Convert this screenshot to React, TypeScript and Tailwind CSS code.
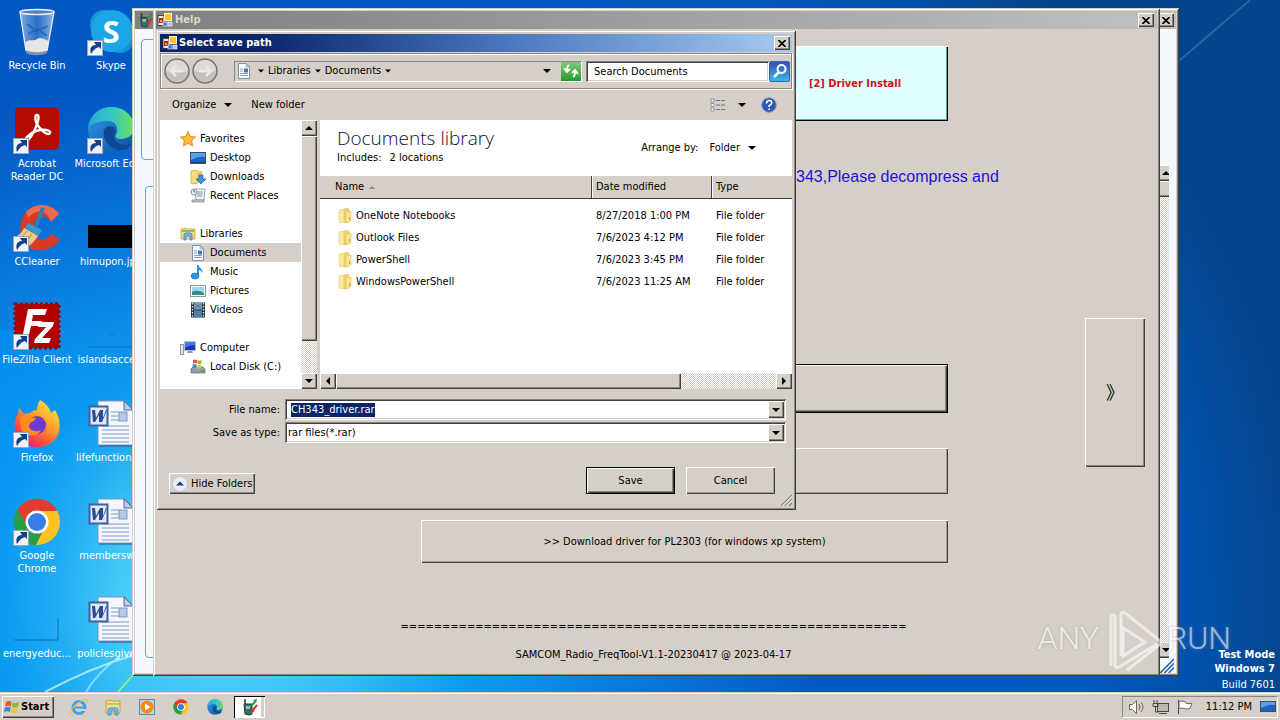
import { useEffect, useRef } from 'react';
import type { ReactNode } from 'react';

const RAISED = 'bg-[#d6cfc8] shadow-[inset_1px_1px_#fff,inset_-1px_-1px_#404040,inset_-2px_-2px_#8a857f]';
const RAISED_THIN = 'bg-[#d6cfc8] shadow-[inset_1px_1px_#fff,inset_-1px_-1px_#404040,inset_-2px_-2px_#a39d97]';
const DEFAULT_BTN = 'bg-[#d6cfc8] border border-black shadow-[inset_1px_1px_#fff,inset_-1px_-1px_#404040,inset_-2px_-2px_#8a857f]';
const SUNKEN = 'bg-white shadow-[inset_1px_1px_#808080,inset_-1px_-1px_#fff,inset_2px_2px_#404040,inset_-2px_-2px_#d6cfc8]';
const WINDOW = 'bg-[#d6cfc8] shadow-[inset_1px_1px_#d6cfc8,inset_-1px_-1px_#404040,inset_2px_2px_#fff,inset_-2px_-2px_#8a857f]';
const DITHER = 'bg-[conic-gradient(#fff_25%,#d6cfc8_0_50%,#fff_0_75%,#d6cfc8_0)] bg-[length:2px_2px]';

type Dir = 'up' | 'down' | 'left' | 'right';

const Arrow = ({ dir = 'down', className = 'size-2' }: { dir?: Dir; className?: string }) => {
	const points = {
		up: '0,6 4,2 8,6',
		down: '0,2 8,2 4,6',
		left: '6,0 2,4 6,8',
		right: '2,0 6,4 2,8',
	};
	return (
		<svg viewBox="0 0 8 8" className={`shrink-0 ${className}`}><polygon points={points[dir]} fill="#000" /></svg>
	);
}

const ScrollButton = ({ dir }: { dir: Dir }) => (
	<button aria-label={`Scroll ${dir}`} className={`flex size-4 shrink-0 items-center justify-center ${RAISED}`}>
		<Arrow dir={dir} />
	</button>
)

const CloseButton = () => (
	<button aria-label="Close" className={`flex h-[14px] w-4 shrink-0 items-center justify-center ${RAISED}`}>
		<svg viewBox="0 0 8 7" className="h-[7px] w-2"><path d="M0.5 0 L7.5 7 M7.5 0 L0.5 7" stroke="#000" strokeWidth="1.6" /></svg>
	</button>
)

const FormIcon = () => (
	<svg viewBox="0 0 16 16" className="size-4 shrink-0">
		<rect x="1" y="3.500" width="6" height="10" fill="#f4e9dc" stroke="#3b2a2a" strokeWidth="0.8" />
		<rect x="2" y="6" width="4" height="5" fill="#c2201c" />
		<rect x="3" y="8" width="2" height="2" fill="#f2a070" />
		<rect x="7.500" y="1.500" width="7" height="7" fill="#ffc524" stroke="#fff2b8" />
		<rect x="6" y="10" width="4" height="4" fill="#3d6fd0" stroke="#fff" strokeWidth="0.6" />
		<rect x="11" y="10" width="4" height="4" fill="#a5c4ef" stroke="#fff" strokeWidth="0.6" />
	</svg>
)

const RadioIcon = ({ className }: { className: string }) => (
	<svg viewBox="0 0 18 18" className={className}>
		<path d="M4 1v6" stroke="#23443f" strokeWidth="1.6" />
		<path d="M3 6h8v10q-3 2-7 0z" fill="#3c6d66" stroke="#1d3a3a" />
		<rect x="5" y="8" width="4" height="3" fill="#7fc6b8" />
		<path d="M10 8l4-4" stroke="#1f9c3a" strokeWidth="2" />
		<path d="M12 2l4-1-1 4z" fill="#1f9c3a" />
		<path d="M16 7l-5 6" stroke="#c8322c" strokeWidth="2" />
		<path d="M10 10l0 5 4-2z" fill="#c8322c" />
	</svg>
)

const Shortcut = () => (
	<g>
		<rect x="0.5" y="32.5" width="15" height="15" fill="#eef3fa" stroke="#9aa7b8" />
		<path d="M4 46c-2-6 1-9 5-9l-2-3h7v7l-2-2c-4 1-5 3-8 7z" fill="#173f85" />
	</g>
)

const RecycleIcon = () => (
	<svg viewBox="0 0 48 48" className="size-12">
		<defs>
			<linearGradient id="bin" x1="0" x2="1"><stop offset="0" stopColor="#b7cee9" stopOpacity="0.75" /><stop offset="0.5" stopColor="#4c86d0" stopOpacity="0.5" /><stop offset="1" stopColor="#c9dcf0" stopOpacity="0.75" /></linearGradient>
		</defs>
		<path d="M7 3l6 40c3 3 18 3 21 0l7-40z" fill="url(#bin)" />
		<path d="M14 16l9 7 12-5M15 26l10-5 9 7" stroke="#1d55a8" strokeWidth="2" fill="none" opacity="0.6" />
		<path d="M12 35c4-5 8-1 12-4s8 1 12 2l-2 10c-4 3-18 3-21 0z" fill="#e8e6e4" />
		<path d="M13 42c4 3 18 3 21 0v3c-5 3-17 3-21 0z" fill="#7e93a8" />
		<ellipse cx="24" cy="4" rx="17" ry="2.5" fill="#4f83c8" stroke="#e6eef7" strokeWidth="1.5" />
		<path d="M7 4l6 39M41 4l-7 39" stroke="#e8f0f8" strokeWidth="1.3" />
	</svg>
)

const SkypeIcon = () => (
	<svg viewBox="0 0 48 48" className="size-12">
		<circle cx="17" cy="16" r="14" fill="#1b93dd" />
		<circle cx="33" cy="31" r="14" fill="#1591da" />
		<circle cx="25" cy="23" r="21" fill="#1ba6ea" />
		<text x="24" y="35" textAnchor="middle" fontFamily="Open Sans" fontWeight="700" fontSize="31" fill="#fff">S</text>
		<Shortcut />
	</svg>
)

const AcrobatIcon = () => (
	<svg viewBox="0 0 48 48" className="size-12">
		<rect x="2" y="1" width="44" height="43" rx="5" fill="#b30b00" />
		<path d="M12 34c2-5 9-9 15-10 7-1 11 1 10 3-2 4-11-4-14-11-1-4-1-7 1-7s2 4 0 9c-2 7-8 17-12 18" fill="none" stroke="#fff" strokeWidth="2.4" />
		<Shortcut />
	</svg>
)

const EdgeShape = () => (
	<>
		<defs>
			<linearGradient id="edgeTop" x1="0" x2="1"><stop offset="0" stopColor="#2aa7d8" /><stop offset="0.55" stopColor="#37c8c4" /><stop offset="1" stopColor="#6de05a" /></linearGradient>
			<linearGradient id="edgeLow" x1="0" y1="0" x2="1" y2="1"><stop offset="0" stopColor="#2a9be6" /><stop offset="1" stopColor="#0c4fa0" /></linearGradient>
		</defs>
		<circle cx="24" cy="24" r="23" fill="url(#edgeLow)" />
		<path d="M1 22C3 8 13 1 25 1c13 0 22 10 22 20 0 8-6 12-13 12-5 0-6-2-5-4 3-5 1-14-8-14C11 15 3 18 1 22z" fill="url(#edgeTop)" />
		<path d="M17 24c-2 10 6 20 18 20 5 0 8-3 10-7-5 3-13 2-16-2-3-3-2-5-1-7 2-4-1-8-5-8-3 0-5 2-6 4z" fill="#0e4a93" />
	</>
)

const EdgeIcon = () => (
	<svg viewBox="0 0 48 48" className="size-12"><EdgeShape /><Shortcut /></svg>
)

const CCleanerIcon = () => (
	<svg viewBox="0 0 48 48" className="size-12">
		<path d="M46 10C39-1 22-2 13 8S6 36 16 43s26 2 31-8l-9-5c-4 6-10 7-14 3s-5-12-1-17 12-5 15 2z" fill="#d83a24" />
		<path d="M46 10C39-1 22-2 13 8l2 6C24 4 34 6 38 18z" fill="#ee6a4c" />
		<path d="M30 4l-7 18" stroke="#2f7fb5" strokeWidth="4" />
		<path d="M15 19l14 7-4 6-14-7z" fill="#3d94c8" />
		<path d="M11 24l14 8c-4 6-9 11-14 12L1 33c5-1 8-5 10-9z" fill="#ecc98c" />
		<path d="M14 27l-8 10M19 30l-8 12" stroke="#b78f4d" />
		<Shortcut />
	</svg>
)

const FileZillaIcon = () => (
	<svg viewBox="0 0 48 48" className="size-12">
		<rect x="2" y="2" width="44" height="44" fill="#b30000" stroke="#8a0d10" strokeWidth="3" strokeDasharray="3 2" />
		<path d="M15 7h19l-2 6H20l-1 6h10l-2 5H18l-3 13H9z" fill="#fff" />
		<path d="M26 20h15l-1 4-11 12h9l-2 5H21l1-4 11-12h-8z" fill="#fff" />
		<Shortcut />
	</svg>
)

const FirefoxIcon = () => (
	<svg viewBox="0 0 48 48" className="size-12">
		<defs>
			<linearGradient id="ffBody" x1="0.9" y1="0" x2="0.2" y2="1"><stop offset="0" stopColor="#fff14a" /><stop offset="0.4" stopColor="#ffa52a" /><stop offset="0.75" stopColor="#ff4a3f" /><stop offset="1" stopColor="#e0127c" /></linearGradient>
		</defs>
		<path d="M27 0c7 4 10 9 11 13l4-3c6 9 6 21 1 28-7 11-25 12-35 3C-1 31 1 19 5 14l1-6 5 6 6-1c3-1 2-3 7-3 0-4 1-7 3-10z" fill="url(#ffBody)" />
		<circle cx="24" cy="25" r="9" fill="#6b3bd0" />
		<path d="M8 17c6-3 9 1 15 1-1 4-6 3-7 8 0 4 7 7 12 4-4 8-16 7-20-1-1-4-1-8 0-12z" fill="#ff8a1f" />
		<Shortcut />
	</svg>
)

const ChromeShape = () => (
	<>
		<path d="M24 24L4.500 11.500A23 23 0 0 1 44 12.500z" fill="#e33b2e" />
		<path d="M24 24L44 12.500A23 23 0 0 1 23 47z" fill="#fdc321" />
		<path d="M24 24L23 47A23 23 0 0 1 4.500 11.500z" fill="#2b9c47" />
		<path d="M24 13h20.500L34 29z" fill="#fdc321" />
		<path d="M14 28L4.500 11.500 30 14z" fill="#e33b2e" />
		<path d="M14.500 29l-9-16L4 14c4 11 8 15 10.500 15zM14.500 29L23 47l9-18z" fill="#2b9c47" />
		<circle cx="24" cy="24" r="11.500" fill="#fff" />
		<circle cx="24" cy="24" r="9" fill="#3a7de8" />
	</>
)

const ChromeIcon = () => (
	<svg viewBox="0 0 48 48" className="size-12"><ChromeShape /><Shortcut /></svg>
)

const WordIcon = () => (
	<svg viewBox="0 0 48 48" className="size-12">
		<path d="M11 1h27l8 9v35H11z" fill="#f3f7fd" stroke="#7d95bf" />
		<path d="M37 1v9h9z" fill="#bccbe4" stroke="#4d6a9e" />
		<path d="M24 12h8M24 16h8M24 20h8M15 26h27M15 30h27M15 34h27M15 38h27M15 42h27" stroke="#7f97c8" />
		<rect x="32" y="12" width="8" height="9" fill="#b6c7e4" stroke="#7f97c8" />
		<rect x="2.500" y="6.500" width="18" height="19" fill="#dfe8f7" stroke="#41609f" strokeWidth="2" />
		<path d="M5 10h3l1 8 4-8h3v8l3-8h1l-5 12h-3v-7l-4 7H6z" fill="#2b4c94" />
		<path d="M12 46h34" stroke="#3a5488" />
	</svg>
)

const BlackThumb = () => <svg viewBox="0 0 48 48" className="size-12"><rect x="1" y="21" width="47" height="23" /></svg>
const LineThumb = () => <svg viewBox="0 0 48 48" className="size-12"><path d="M1 45h46M22 32q3 1 6 0" fill="none" stroke="#1272b8" /></svg>
const CornerThumb = () => <svg viewBox="0 0 48 48" className="size-12"><path d="M1 44h44V22" fill="none" stroke="#146cb0" /></svg>

const desktopIcons: { label: string; icon: ReactNode }[] = [
	{ label: 'Recycle Bin', icon: <RecycleIcon /> },
	{ label: 'Acrobat Reader DC', icon: <AcrobatIcon /> },
	{ label: 'CCleaner', icon: <CCleanerIcon /> },
	{ label: 'FileZilla Client', icon: <FileZillaIcon /> },
	{ label: 'Firefox', icon: <FirefoxIcon /> },
	{ label: 'Google Chrome', icon: <ChromeIcon /> },
	{ label: 'energyeduc...', icon: <CornerThumb /> },
	{ label: 'Skype', icon: <SkypeIcon /> },
	{ label: 'Microsoft Edge', icon: <EdgeIcon /> },
	{ label: 'himupon.jpg', icon: <BlackThumb /> },
	{ label: 'islandsacce...', icon: <LineThumb /> },
	{ label: 'lifefunctions...', icon: <WordIcon /> },
	{ label: 'membersw...', icon: <WordIcon /> },
	{ label: 'policiesgive...', icon: <WordIcon /> },
];

const DesktopIcons = () => (
	<div className="grid w-[148px] grid-flow-col grid-cols-2 grid-rows-[repeat(7,98px)] pt-2 text-white [text-shadow:1px_1px_2px_#003a7a]">
		{desktopIcons.map(({ label, icon }) => (
			<button key={label} className="flex flex-col items-center gap-[3px]">
				{icon}
				<span className={`leading-[13px] ${label.startsWith('Acrobat') || label.startsWith('Google') ? 'w-[60px]' : 'whitespace-nowrap'}`}>{label}</span>
			</button>
		))}
	</div>
)

const Wallpaper = () => (
	<svg viewBox="0 0 1280 692" preserveAspectRatio="none" className="absolute inset-0 size-full">
		<defs>
			<radialGradient id="sky" gradientUnits="userSpaceOnUse" cx="220" cy="600" r="1080" gradientTransform="translate(0 90) scale(1 0.85)">
				<stop offset="0" stopColor="#63dffa" />
				<stop offset="0.12" stopColor="#3cc4f6" />
				<stop offset="0.24" stopColor="#0e9cf0" />
				<stop offset="0.4" stopColor="#0878dc" />
				<stop offset="0.56" stopColor="#0458c4" />
				<stop offset="0.8" stopColor="#0458c0" />
				<stop offset="0.92" stopColor="#0350a8" />
				<stop offset="1" stopColor="#04448a" />
			</radialGradient>
			<linearGradient id="leftEdge" x1="0" x2="1"><stop offset="0" stopColor="#0092f4" stopOpacity="0.6" /><stop offset="1" stopColor="#0092f4" stopOpacity="0" /></linearGradient>
		</defs>
		<rect width="1280" height="692" fill="url(#sky)" />
		<rect y="330" width="120" height="362" fill="url(#leftEdge)" />
		<path d="M45 692Q90 668 134 655" stroke="#bdf2ff" strokeWidth="2" fill="none" opacity="0.8" />
		<path d="M86 692Q98 672 118 658" stroke="#a5ecff" strokeWidth="2" fill="none" opacity="0.7" />
		<path d="M118 692L134 674" stroke="#7df08c" strokeWidth="2" />
		<path d="M1180 60L1250 0" stroke="#4c86c4" strokeWidth="2" opacity="0.5" />
	</svg>
)

const MainWindow = () => (
	<section className={`absolute top-2 right-[101px] bottom-4 left-[132px] flex flex-col p-[3px] ${WINDOW}`}>
		<header className="flex h-[18px] items-center justify-between bg-linear-to-r from-[#808080] to-[#c0c0c0] pr-[2px] pl-[3px]">
			<RadioIcon className="size-4" />
			<CloseButton />
		</header>
		<div className="flex flex-1 flex-col bg-[#f5f9ff] pt-[10px] pl-[6px]">
			<div className="mr-6 h-[121px] rounded-[4px] border border-[#5ba4e6]" />
			<div className="mt-[5px] flex flex-1 gap-2 pr-[7px]">
				<div className="mt-[21px] ml-1 flex-1 rounded-[4px] border border-[#5ba4e6]" />
				<div className={`flex w-[11px] flex-col overflow-hidden ${DITHER}`}>
					<ScrollButton dir="up" />
					<div className={`h-4 w-4 ${RAISED}`} />
					<div className="flex-1" />
					<ScrollButton dir="down" />
				</div>
			</div>
			<svg viewBox="0 0 14 14" className="mr-[2px] size-[15px] self-end"><path d="M1 14L14 1M5 14L14 5M9 14L14 9" stroke="#2c6ab8" strokeWidth="1.5" /></svg>
		</div>
	</section>
)

const HelpWindow = () => (
	<section className={`absolute top-2 right-[120px] bottom-4 left-[153px] flex flex-col p-[3px] ${WINDOW}`}>
		<header className="flex h-[18px] items-center gap-[2px] bg-linear-to-r from-[#808080] to-[#c0c0c0] pr-[3px] pl-px">
			<FormIcon />
			<h1 className="flex-1 font-bold text-[#dcd7d0]">Help</h1>
			<CloseButton />
		</header>
		<div className="flex justify-between pr-3 pl-[265px]">
			<div className="flex w-[527px] flex-col pt-[17px]">
				<button className="h-[75px] w-[186px] self-end bg-[#e0ffff] font-bold text-[#d0101c] shadow-[inset_1px_1px_#fff,inset_-1px_-1px_#000,inset_-2px_-2px_#5fa8a8]">[2] Driver Install</button>
				<p className="mt-[46px] pl-[375px] font-['Liberation_Sans',sans-serif] text-[16px] leading-5 whitespace-nowrap text-[#1b12d8]">343,Please decompress and</p>
				<button aria-label="Download CH343 driver" className={`mt-[177px] h-[49px] ${DEFAULT_BTN}`} />
				<button aria-label="Download CH340 driver" className={`mt-[35px] h-[46px] ${RAISED_THIN}`} />
				<button className={`mt-[26px] h-[43px] ${RAISED_THIN}`}>&gt;&gt; Download driver for PL2303 (for windows xp system)</button>
			</div>
			<button className={`mt-[289px] h-[149px] w-[60px] font-['Liberation_Sans','Noto_Sans_CJK_SC',sans-serif] text-[18px] ${RAISED}`}>》</button>
		</div>
		<footer className="mt-[57px] flex flex-col items-center gap-[14px] pr-[6px]">
			<p className="leading-[14px]">{'='.repeat(61)}</p>
			<p className="leading-[14px]">SAMCOM_Radio_FreqTool-V1.1-20230417 @ 2023-04-17</p>
		</footer>
	</section>
)

const TreeIcon = ({ name }: { name: string }) => (
	<svg viewBox="0 0 16 16" className="size-4 shrink-0">
		{name === 'Favorites' && <path d="M8 0.500l2.300 5 5.200.600-3.900 3.600 1.100 5.300L8 12.400 3.300 15l1.100-5.300L.500 6.100l5.200-.600z" fill="#ffbe3b" stroke="#e58a1c" />}
		{name === 'Desktop' && <><rect x="0.500" y="2.500" width="15" height="11" fill="#1d62c0" stroke="#3c4f6a" /><path d="M1 3h14v4Q8 6 1 10z" fill="#58a2ea" /><rect x="1" y="12" width="14" height="1" fill="#223a5c" /></>}
		{name === 'Downloads' && <><path d="M1 2l5-1 2 1v12l-6 1-1-1z" fill="#f7dc7f" stroke="#c9a23f" strokeWidth="0.700" /><path d="M8 2h4v9H8z" fill="#eec95c" /><path d="M9 6h4v4h3l-5 5-5-5h3z" fill="#3f95e0" stroke="#1b5fa8" strokeWidth="0.700" /></>}
		{name === 'Recent Places' && <><path d="M5 1h10l-1 11H6z" fill="#f2f5f7" stroke="#7f8d97" strokeWidth="0.800" /><path d="M7 4h6M7 6h6M7 8h5" stroke="#7f9bb0" /><circle cx="4" cy="4" r="3" fill="#e2ecf3" stroke="#70828f" strokeWidth="0.800" /><path d="M4 2v2h1.500" stroke="#333" strokeWidth="0.700" fill="none" /><path d="M2 12h12v2H2z" fill="#c4ced5" stroke="#70828f" strokeWidth="0.700" /></>}
		{name === 'Libraries' && <><path d="M1 3l5-1 1 1h8v10H1z" fill="#f7dc7f" stroke="#c9a23f" strokeWidth="0.800" /><path d="M2 5h12" stroke="#5bb85a" strokeWidth="1.500" /><path d="M4 14V9q0-2 2-2h4q2 0 2 2v5h-2v-4H6v4z" fill="#76b6ea" stroke="#3d83c4" strokeWidth="0.800" /></>}
		{name === 'Documents' && <><path d="M2.500.500h8l3 3v12h-11z" fill="#fbfdff" stroke="#7c93ad" /><path d="M10 .500v3.500h3.500z" fill="#c4d4e6" stroke="#7c93ad" strokeWidth="0.600" /><path d="M4 6h3M4 8h3M4 10.500h8M4 12.500h8" stroke="#8aa0ba" /><rect x="8" y="5.500" width="4" height="4" fill="#4078bf" /></>}
		{name === 'Music' && <><path d="M8 1v11" stroke="#1f83d4" strokeWidth="1.800" /><path d="M8 .500c1 4 6 4 4 9 0-3-2-3-4-4z" fill="#2c96e6" /><ellipse cx="5" cy="12" rx="4" ry="3" fill="#2c96e6" stroke="#1468b4" strokeWidth="0.600" /></>}
		{name === 'Pictures' && <><rect x="0.500" y="2.500" width="15" height="11" fill="#fff" stroke="#8297ac" /><rect x="2" y="4" width="12" height="8" fill="#9fd4f2" /><path d="M2 9q5-3 12 1v2H2z" fill="#2f8f7c" /></>}
		{name === 'Videos' && <><rect x="1" y="0.500" width="14" height="15" fill="#26323c" /><rect x="4" y="1" width="8" height="6.500" fill="#5fa4d8" /><rect x="4" y="8.500" width="8" height="6.500" fill="#3d85c4" /><path d="M5 2l6 4M11 2l-6 4M5 10l6 4" stroke="#9a5c3c" /><path d="M2.500 1v14M13.500 1v14" stroke="#e6ecf0" strokeDasharray="1.500 1.500" strokeWidth="1.300" /></>}
		{name === 'Computer' && <><rect x="0.500" y="4.500" width="3" height="10" fill="#dfe5ea" stroke="#76838f" strokeWidth="0.800" /><rect x="4.500" y="1.500" width="11" height="9" fill="#1a35b8" stroke="#b3bfca" /><path d="M5 2h10v3Q9 5 5 8z" fill="#4a78e6" /><path d="M8 11h4l1 2H7z" fill="#8c99a6" /></>}
		{name === 'Local Disk (C:)' && <><path d="M1 10l2-2h10l2 2v4H1z" fill="#8fa0ab" stroke="#56656f" strokeWidth="0.700" /><rect x="10" y="11" width="4" height="2" fill="#46b83c" /><path d="M3 1q2-1 4 0v3.500q-2-1-4 0z" fill="#e8572a" /><path d="M7.500 1q2 1 4 0v3.500q-2 1-4 0z" fill="#86b93a" /><path d="M2.500 5.500q2-1 4 0V9q-2-1-4 0z" fill="#3b8bd8" /><path d="M7 5.500q2 1 4 0V9q-2 1-4 0z" fill="#f5c430" /></>}
	</svg>
)

const tree = [
	{ name: 'Favorites', children: ['Desktop', 'Downloads', 'Recent Places'] },
	{ name: 'Libraries', children: ['Documents', 'Music', 'Pictures', 'Videos'] },
	{ name: 'Computer', children: ['Local Disk (C:)'] },
];

const FolderTree = () => (
	<nav className="flex h-full w-[157px] shrink-0">
		<ul className="flex flex-1 flex-col gap-[19px] overflow-hidden bg-white pt-[9px] leading-4">
			{tree.map((group) => (
				<li key={group.name}>
					<button className="flex h-[19px] w-full items-center gap-1 pl-5"><TreeIcon name={group.name} />{group.name}</button>
					<ul>
						{group.children.map((name) => (
							<li key={name}>
								<button className={`flex h-[19px] w-full items-center gap-1 pl-[30px] whitespace-nowrap ${name === 'Documents' ? 'bg-[#d6cfc8]' : ''}`}><TreeIcon name={name} />{name}</button>
							</li>
						))}
					</ul>
				</li>
			))}
		</ul>
		<div className={`flex w-4 flex-col ${DITHER}`}>
			<ScrollButton dir="up" />
			<div className={`h-[205px] ${RAISED}`} />
			<div className="flex-1" />
			<ScrollButton dir="down" />
		</div>
	</nav>
)

const FolderIcon = () => (
	<svg viewBox="0 0 16 16" className="size-4 shrink-0">
		<path d="M2 2l4-1 2 1v12l-5 1-1-1z" fill="#fbe9a0" stroke="#e3c668" strokeWidth="0.500" />
		<path d="M7 1l3-1 2 1v13l-5 1z" fill="#efd273" stroke="#dcbc58" strokeWidth="0.500" />
		<path d="M9 4l5-1v10l-5 2z" fill="#f9e59a" stroke="#d9b750" strokeWidth="0.500" />
		<path d="M12.500 9v3" stroke="#c9a545" />
	</svg>
)

const files = [
	{ name: 'OneNote Notebooks', date: '8/27/2018 1:00 PM' },
	{ name: 'Outlook Files', date: '7/6/2023 4:12 PM' },
	{ name: 'PowerShell', date: '7/6/2023 3:45 PM' },
	{ name: 'WindowsPowerShell', date: '7/6/2023 11:25 AM' },
];

const FileList = () => (
	<div className="flex min-w-0 flex-1 flex-col bg-white">
		<div className="flex h-14 items-start justify-between pr-9 pl-[17px]">
			<div>
				<h3 className="pt-[6px] font-['Open_Sans',sans-serif] text-[19px] leading-6 font-light text-[#101030]">Documents library</h3>
				<p className="flex gap-2 leading-4">Includes: <a href="#locations">2 locations</a></p>
			</div>
			<p className="flex items-center gap-[11px] pt-5 leading-4">Arrange by: <button className="flex items-center gap-2">Folder <Arrow /></button></p>
		</div>
		<table className="w-full table-fixed border-collapse text-left">
			<thead>
				<tr className="h-[22px] border-b border-[#404040] bg-[#d6cfc8] *:p-0 *:font-normal">
					<th className="shadow-[inset_-1px_0_#404040]"><span className="flex items-center gap-[5px] pl-[15px]">Name <svg viewBox="0 0 6 4" className="h-1 w-[6px]"><path d="M0 4l3-3 3 3z" fill="#8a857f" /></svg></span></th>
					<th className="w-[120px] shadow-[inset_1px_0_#fff,inset_-1px_0_#404040]"><span className="pl-1">Date modified</span></th>
					<th className="w-20 shadow-[inset_1px_0_#fff]"><span className="pl-1">Type</span></th>
				</tr>
			</thead>
			<tbody className="before:block before:h-[6px]">
				{files.map((file) => (
					<tr key={file.name} className="h-[22px] *:p-0">
						<td><span className="flex items-center gap-[3px] pl-[17px]"><FolderIcon />{file.name}</span></td>
						<td><span className="pl-1">{file.date}</span></td>
						<td><span className="pl-1">File folder</span></td>
					</tr>
				))}
			</tbody>
		</table>
		<div className="flex-1" />
		<div className={`flex h-4 ${DITHER}`}>
			<ScrollButton dir="left" />
			<div className={`w-[345px] ${RAISED}`} />
			<div className="flex-1" />
			<ScrollButton dir="right" />
		</div>
	</div>
)

const NavCircle = ({ dir }: { dir: 'Back' | 'Forward' }) => (
	<button aria-label={dir} className="size-[26px]">
		<svg viewBox="0 0 26 26" className="size-[26px]">
			<circle cx="13" cy="13" r="12" fill="#c6c1bd" stroke="#77736f" strokeWidth="1.500" />
			<path d="M2 13a11 11 0 0 1 22 0q-11 3-22 0z" fill="#dedad6" />
			<path d={dir === 'Back' ? 'M19 13H7m5-5l-5 5 5 5' : 'M7 13h12m-5-5l5 5-5 5'} stroke="#ebe8e5" strokeWidth="2.500" fill="none" />
		</svg>
	</button>
)

const SaveDialog = () => {
	const nameRef = useRef<HTMLInputElement>(null);

	useEffect(() => {
		nameRef.current?.focus();
		nameRef.current?.select();
	}, []);

	return (
		<section role="dialog" aria-labelledby="dialog-title" className={`absolute top-[30px] left-[156px] w-[640px] p-1 ${WINDOW}`}>
			<header className="flex h-[18px] items-center gap-px bg-linear-to-r from-[#0a246a] from-15% via-[#4a78c0] via-55% to-[#a6caf0] px-[2px]">
				<FormIcon />
				<h2 id="dialog-title" className="flex-1 leading-4 font-bold text-white">Select save path</h2>
				<CloseButton />
			</header>

			<div className="mt-px flex h-9 items-center border border-[#8a857f] pr-px pl-[3px] shadow-[1px_1px_#fff,inset_1px_1px_#fff]">
				<div className="flex gap-[2px]"><NavCircle dir="Back" /><NavCircle dir="Forward" /></div>
				<div className="ml-4 flex h-[21px] flex-1 items-center border border-t-[#8a857f] border-r-white border-b-white border-l-[#8a857f] pl-px">
					<TreeIcon name="Documents" />
					<span className="ml-[6px] flex items-center gap-1">
						<Arrow className="size-[6px]" />
						<a href="#libraries">Libraries</a>
						<Arrow className="size-[6px]" />
						<a href="#documents">Documents</a>
						<Arrow className="size-[6px]" />
					</span>
					<button aria-label="Previous locations" className="ml-auto px-[10px]"><Arrow /></button>
					<button aria-label="Refresh" className="flex h-[19px] w-5 items-center justify-center bg-linear-to-b from-[#7ecb76] to-[#1f9a2c]">
						<svg viewBox="0 0 18 18" className="size-[18px]"><path d="M7 3q-2 1-2 5M2 6l3 4 3-3M11 15q2-1 2-5M10 11l3-3 3 4" stroke="#fff" strokeWidth="1.800" fill="none" /></svg>
					</button>
				</div>
				<input aria-label="Search Documents" placeholder="Search Documents" className={`ml-1 h-[21px] w-[183px] px-2 outline-none placeholder:text-black ${SUNKEN}`} />
				<button aria-label="Search" className="flex size-[21px] items-center justify-center rounded-[2px] border border-[#3d64b4] bg-linear-to-b from-[#3450b4] to-[#39b8ea]">
					<svg viewBox="0 0 18 18" className="size-[18px]"><circle cx="10.500" cy="7" r="4" fill="none" stroke="#fff" strokeWidth="2" /><path d="M8 10l-5 5" stroke="#fff" strokeWidth="2.500" /></svg>
				</button>
			</div>

			<div className="flex h-[31px] items-center pr-[15px] pl-3">
				<button className="flex items-center gap-2">Organize <Arrow /></button>
				<button className="ml-[19px]">New folder</button>
				<button aria-label="Change your view" className="ml-auto flex items-center gap-3">
					<svg viewBox="0 0 16 14" className="h-[14px] w-4"><path d="M1 1h3v3H1zM1 5.500h3v3H1zM1 10h3v3H1z" fill="#fff" stroke="#77818c" strokeWidth="0.800" /><path d="M6 2.500h4M11 2.500h4M6 7h4M11 7h4M6 11.500h4M11 11.500h4" stroke="#6a7684" /></svg>
					<Arrow />
				</button>
				<button aria-label="Help" className="ml-[15px]">
					<svg viewBox="0 0 16 16" className="size-4"><circle cx="8" cy="8" r="7.300" fill="#2c55b8" stroke="#8a9cc8" /><path d="M5.500 6.500q0-3 2.700-3t2.500 2.500q0 1.500-2.500 2.800v1.200M8.200 11.500v1.500" stroke="#fff" strokeWidth="1.600" fill="none" /></svg>
				</button>
			</div>

			<div className="flex h-[269px] gap-[3px]">
				<FolderTree />
				<FileList />
			</div>

			<div className="grid grid-cols-[120px_1fr] items-center gap-x-[5px] gap-y-[2px] pt-[10px] pr-[6px]">
				<label htmlFor="file-name" className="text-right">File name:</label>
				<div className={`flex h-[21px] items-center p-[2px] ${SUNKEN}`}>
					<input id="file-name" ref={nameRef} defaultValue="CH343_driver.rar" className="min-w-0 flex-1 bg-transparent pl-1 leading-[14px] outline-none selection:bg-[#0a246a] selection:text-white" />
					<button aria-label="Previous names" className={`flex h-[17px] w-4 items-center justify-center ${RAISED}`}><Arrow /></button>
				</div>
				<label htmlFor="file-type" className="text-right">Save as type:</label>
				<div className={`flex h-[21px] items-center p-[2px] ${SUNKEN}`}>
					<select id="file-type" className="min-w-0 flex-1 appearance-none bg-transparent pl-px outline-none"><option>rar files(*.rar)</option></select>
					<span className={`flex h-[17px] w-4 items-center justify-center ${RAISED}`}><Arrow /></span>
				</div>
			</div>

			<div className="flex gap-[11px] pt-6 pr-[17px] pl-[9px]">
				<button className={`mt-[6px] mr-auto flex h-[21px] items-center gap-[3px] px-[3px] ${RAISED}`}>
					<svg viewBox="0 0 16 16" className="size-4"><circle cx="8" cy="8" r="7.500" fill="#e9edf6" stroke="#c0c8dc" /><path d="M4 9.500l4-4 4 4z" fill="#253a78" /></svg>
					Hide Folders
				</button>
				<button className={`h-[27px] w-[89px] ${DEFAULT_BTN}`}>Save</button>
				<button className={`h-[27px] w-[89px] ${RAISED_THIN}`}>Cancel</button>
			</div>
			<svg viewBox="0 0 12 12" className="ml-auto size-3"><path d="M1 12L12 1M5 12l7-7M9 12l3-3" stroke="#8a857f" strokeWidth="1.300" /><path d="M2 12L12 2M6 12l6-6" stroke="#fff" strokeWidth="0.700" /></svg>
		</section>
	)
}

const Watermark = () => (
	<div className="pointer-events-none absolute right-[49px] bottom-[18px] flex items-center gap-[6px] font-['Roboto',sans-serif] text-[32px] leading-[22px] font-light text-white opacity-60 [text-shadow:0_0_3px_#888]">
		<span className="pb-2">ANY</span>
		<svg viewBox="0 0 56 64" className="h-16 w-14">
			<path d="M6 56V8q0-5 4-2v49q0 4 4 2l38-23" fill="none" stroke="#fff" strokeWidth="3" />
			<path d="M16 46V5q0-4 4-2l34 27q3 3 0 5L22 60" fill="none" stroke="#fff" strokeWidth="3" />
			<path d="M18 18v28l22-14z" fill="none" stroke="#fff" strokeWidth="3" />
		</svg>
		<span className="pb-2">RUN</span>
	</div>
)

const WindowsFlag = () => (
	<svg viewBox="0 0 16 16" className="size-4">
		<path d="M2 3q3-2 5.500 0L7 7.500q-3-1.500-6 0z" fill="#e8572a" />
		<path d="M8.500 3.500q3 1.500 6.500-.500L14 8q-3 1.500-6 0z" fill="#86b93a" />
		<path d="M1 8.500q3-1.500 5.800 0L6 13q-3-1.500-6 0z" fill="#3b8bd8" />
		<path d="M7.800 9q3 1.500 6 0l-1 4.500q-3 1.500-6 0z" fill="#f5c430" />
	</svg>
)

const Taskbar = () => (
	<footer className="flex h-7 shrink-0 items-center bg-[#d6cfc8] px-[2px] pt-[3px] pb-px shadow-[inset_0_1px_#d6cfc8,inset_0_2px_#fff]">
		<button className={`flex h-[22px] w-[52px] items-center gap-px pl-[2px] font-bold ${RAISED}`}><WindowsFlag />Start</button>
		<div className="ml-[15px] flex items-center gap-[14px]">
			<button aria-label="Internet Explorer">
				<svg viewBox="0 0 20 20" className="size-5"><circle cx="10" cy="10.500" r="6" fill="none" stroke="#3fa0e6" strokeWidth="3" /><path d="M5 10.500h11" stroke="#3fa0e6" strokeWidth="2" /><path d="M13 13h6" stroke="#d6cfc8" strokeWidth="2" /><path d="M2 17Q-1 14 8 7t10-4q1 1 0 3" stroke="#f0bf3c" strokeWidth="1.300" fill="none" /></svg>
			</button>
			<button aria-label="Explorer">
				<svg viewBox="0 0 20 20" className="size-5"><path d="M3 4l5-1 2 1h7v12H3z" fill="#f7dc7f" stroke="#c9a23f" /><path d="M4 7h13" stroke="#6dbd62" /><path d="M5 18v-5q0-2 2-2h6q2 0 2 2v5h-3v-4H8v4z" fill="#76b6ea" stroke="#4f92cc" /></svg>
			</button>
			<button aria-label="Media Player">
				<svg viewBox="0 0 20 20" className="size-5"><rect x="2.500" y="2.500" width="15" height="15" fill="#b9d4ea" stroke="#5f8cb4" /><circle cx="10" cy="10" r="6.500" fill="#f18a1d" /><path d="M8 6.500l5.500 3.500L8 13.500z" fill="#fff" /></svg>
			</button>
			<button aria-label="Chrome" className="px-px"><svg viewBox="-3 -3 54 54" className="size-[18px]"><ChromeShape /></svg></button>
			<button aria-label="Edge" className="px-px"><svg viewBox="-3 -3 54 54" className="size-[18px]"><EdgeShape /></svg></button>
		</div>
		<button aria-label="Radio tool" className="ml-[9px] flex h-[22px] w-[31px] items-center justify-center bg-white shadow-[inset_1px_1px_#000,inset_-1px_-1px_#fff,inset_-4px_0_#d6cfc8]"><RadioIcon className="size-[18px]" /></button>
		<div className="ml-auto flex h-[22px] items-center border border-t-[#8a857f] border-r-white border-b-white border-l-[#8a857f] pr-px pl-[5px]">
			<svg viewBox="0 0 18 16" className="h-4 w-[18px]"><path d="M1.500 5.500h3l4-4v13l-4-4h-3z" fill="#fff" stroke="#6e6a66" /><path d="M11 5q2 3 0 6M13 3q4 5 0 10" stroke="#6e6a66" fill="none" /></svg>
			<svg viewBox="0 0 18 16" className="ml-[6px] h-4 w-[18px]"><rect x="5.500" y="4.500" width="11" height="8" fill="#bdb8b2" stroke="#4a4744" /><path d="M7 14.500h8M2 1v3M5 1v3M1 4.500h5v3H1zM3.500 8v5h3" stroke="#4a4744" fill="none" /></svg>
			<svg viewBox="0 0 18 16" className="ml-[6px] h-4 w-[18px]"><path d="M2.500 1v14" stroke="#4a4744" /><path d="M3 2.500q3-1 6 0 0 2 2 2h5l-2 5q-3 1-6 0-2-1-5 0z" fill="#fff" stroke="#6e6a66" /></svg>
			<time className="ml-3 whitespace-nowrap">11:12 PM</time>
			<button aria-label="Show desktop" className="ml-2"><svg viewBox="0 0 16 16" className="size-4"><rect x="0.500" y="2.500" width="15" height="10" fill="#1d62c0" stroke="#3c4f6a" /><path d="M1 3h14v3Q8 5 1 9z" fill="#58a2ea" /></svg></button>
		</div>
	</footer>
)

const App = () => {
	return (
		<div className="flex h-screen flex-col overflow-hidden font-['DejaVu_Sans_Condensed','DejaVu_Sans',sans-serif] text-[11px] leading-[14px] text-black">
			<main className="relative flex-1 overflow-hidden bg-[#0458b8]">
				<Wallpaper />
				<div className="relative"><DesktopIcons /></div>
				<MainWindow />
				<HelpWindow />
				<SaveDialog />
				<Watermark />
				<p className="absolute right-[5px] bottom-0 flex flex-col text-right text-white"><b>Test Mode</b><b>Windows 7</b><span className="mt-[2px]">Build 7601</span></p>
			</main>
			<Taskbar />
		</div>
	)
}

export default App
